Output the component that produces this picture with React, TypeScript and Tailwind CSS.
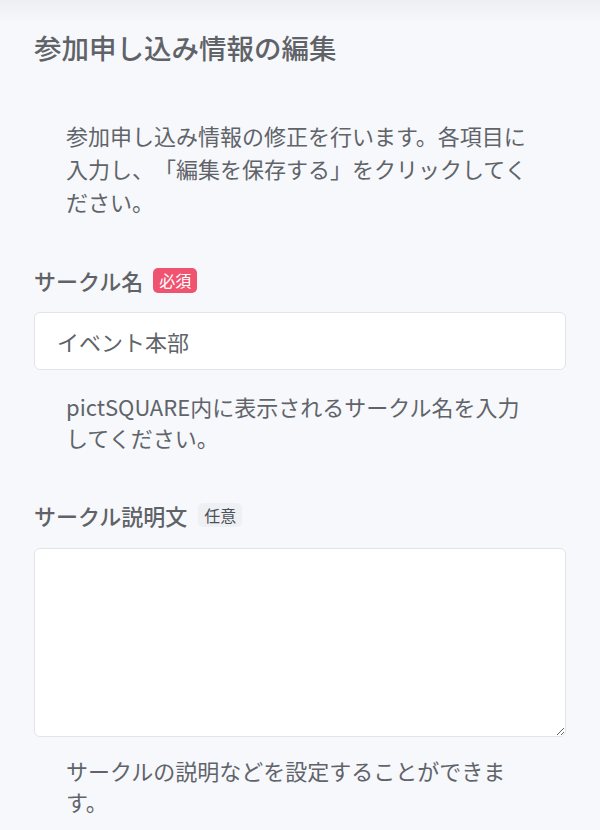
import { useState } from "react";

const Badge = ({ required }: { required: boolean }) =>
    required ? (
        <span className="inline-flex h-[25px] items-center rounded-[5px] bg-[#f0536f] px-[6px] text-[16px] leading-none text-white">必須</span>
    ) : (
        <span className="inline-flex h-[24px] items-center rounded-[5px] bg-[#eef0f3] px-[6px] text-[16px] leading-none text-[#4b5058]">任意</span>
    );

export default function App() {
    const [circleName, setCircleName] = useState("イベント本部");
    const [description, setDescription] = useState("");

    return (
        <div
            className="min-h-screen bg-[#f7f8fb] bg-[linear-gradient(to_bottom,#eeeff2_0px,#f7f8fb_24px)] text-[#60646a] [text-spacing-trim:space-all]"
            style={{ fontFamily: '"Noto Sans CJK JP", "Noto Sans", sans-serif' }}
        >
            <div className="px-[34px] pt-[27px]">
                {/* Page title */}
                <h1 className="text-[27.5px] font-medium leading-[40px] text-[#5f6368]">参加申し込み情報の編集</h1>

                {/* Intro */}
                <p className="mt-[52px] px-8 text-[22px] leading-[33px]">
                    参加申し込み情報の修正を行います。各項目に入力し、「編集を保存する」をクリックしてください。
                </p>

                {/* Circle name */}
                <div className="mt-[46px] flex h-[32px] items-center gap-[10px]">
                    <label className="text-[22px] font-medium text-[#5f6368]">サークル名</label>
                    <Badge required />
                </div>
                <input
                    value={circleName}
                    onChange={(e) => setCircleName(e.target.value)}
                    className="mt-4 block h-[58px] w-full rounded-[6px] border border-[#e2e4e8] bg-white px-[22px] text-[22px] text-[#60646a] outline-none"
                />
                <p className="mt-[21px] px-8 text-[22px] leading-[31px]">pictSQUARE内に表示されるサークル名を入力してください。</p>

                {/* Circle description */}
                <div className="mt-[46px] flex h-[32px] items-center gap-[11px]">
                    <label className="text-[22px] font-medium text-[#5f6368]">サークル説明文</label>
                    <Badge required={false} />
                </div>
                <textarea
                    value={description}
                    onChange={(e) => setDescription(e.target.value)}
                    className="mt-[17px] block h-[189px] w-full rounded-[6px] border border-[#e2e4e8] bg-white px-[22px] py-3 text-[22px] text-[#60646a] outline-none"
                />
                <p className="mt-[18px] px-8 text-[22px] leading-[31px]">サークルの説明などを設定することができます。</p>
            </div>
        </div>
    );
}
